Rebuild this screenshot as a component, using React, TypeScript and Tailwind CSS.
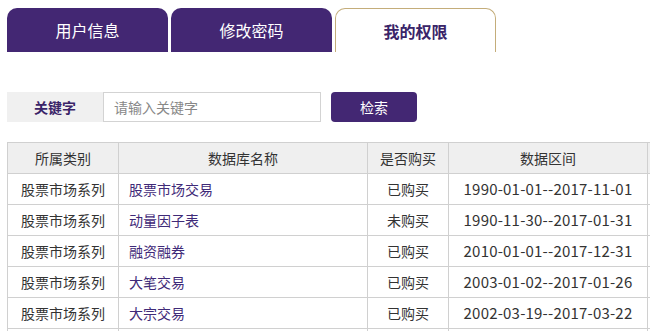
import { useState } from 'react';

const rows = [
  { cat: '股票市场系列', name: '股票市场交易', bought: '已购买', range: '1990-01-01--2017-11-01' },
  { cat: '股票市场系列', name: '动量因子表', bought: '未购买', range: '1990-11-30--2017-01-31' },
  { cat: '股票市场系列', name: '融资融券', bought: '已购买', range: '2010-01-01--2017-12-31' },
  { cat: '股票市场系列', name: '大笔交易', bought: '已购买', range: '2003-01-02--2017-01-26' },
  { cat: '股票市场系列', name: '大宗交易', bought: '已购买', range: '2002-03-19--2017-03-22' },
  { cat: '', name: '', bought: '', range: '' }
];

const tabs = ['用户信息', '修改密码', '我的权限'];

export default function App() {
  const [active, setActive] = useState(2);
  const [keyword, setKeyword] = useState('');

  return (
    <div className="w-[650px] h-[331px] overflow-hidden bg-white font-['Noto_Sans_CJK_SC','Noto_Sans',sans-serif] text-[#333]">
      {/* Tabs */}
      <div className="flex gap-[3px] pl-[7px] pt-[8px]">
        {tabs.map((t, i) =>
          i === active ? (
            <button
              key={t}
              onClick={() => setActive(i)}
              className="w-[161px] h-[44px] rounded-t-[10px] border border-b-0 border-[#c4ad7a] bg-white text-[16px] font-bold text-[#3a2468]"
            >
              {t}
            </button>
          ) : (
            <button
              key={t}
              onClick={() => setActive(i)}
              className="w-[161px] h-[44px] rounded-t-[10px] bg-[#432773] text-[16px] text-white"
            >
              {t}
            </button>
          )
        )}
      </div>

      {/* Search */}
      <div className="flex items-center mt-[40px] pl-[7px] h-[30px]">
        <div className="w-[96px] h-full bg-[#f0f0f0] flex items-center justify-center text-[14px] font-bold text-[#3a2468]">
          关键字
        </div>
        <input
          value={keyword}
          onChange={(e) => setKeyword(e.target.value)}
          placeholder="请输入关键字"
          className="w-[218px] h-full border border-[#d3d3d3] px-[10px] text-[14px] placeholder:text-[#888] outline-none"
        />
        <button className="ml-[10px] w-[86px] h-full rounded-[4px] bg-[#432773] text-white text-[14px]">
          检索
        </button>
      </div>

      {/* Table */}
      <div className="mt-[20px] pl-[7px]">
        <table className="w-[760px] border-collapse text-[14px] table-fixed">
          <colgroup>
            <col className="w-[111px]" />
            <col className="w-[249px]" />
            <col className="w-[81px]" />
            <col className="w-[199px]" />
            <col className="w-[120px]" />
          </colgroup>
          <thead>
            <tr className="h-[31px] bg-[#efefef]">
              <th className="border border-[#d0d0d0] font-normal">所属类别</th>
              <th className="border border-[#d0d0d0] font-normal">数据库名称</th>
              <th className="border border-[#d0d0d0] font-normal">是否购买</th>
              <th className="border border-[#d0d0d0] font-normal">数据区间</th>
              <th className="border border-[#d0d0d0] font-normal"></th>
            </tr>
          </thead>
          <tbody>
            {rows.map((r, i) => (
              <tr key={i} className="h-[31px]">
                <td className="border border-[#d0d0d0] text-center">{r.cat}</td>
                <td className="border border-[#d0d0d0] pl-[10px] text-[#3f2a78]">{r.name}</td>
                <td className="border border-[#d0d0d0] text-center">{r.bought}</td>
                <td className="border border-[#d0d0d0] text-center text-[15px] tracking-[0.2px]">{r.range}</td>
                <td className="border border-[#d0d0d0] text-center"></td>
              </tr>
            ))}
          </tbody>
        </table>
      </div>
    </div>
  );
}
